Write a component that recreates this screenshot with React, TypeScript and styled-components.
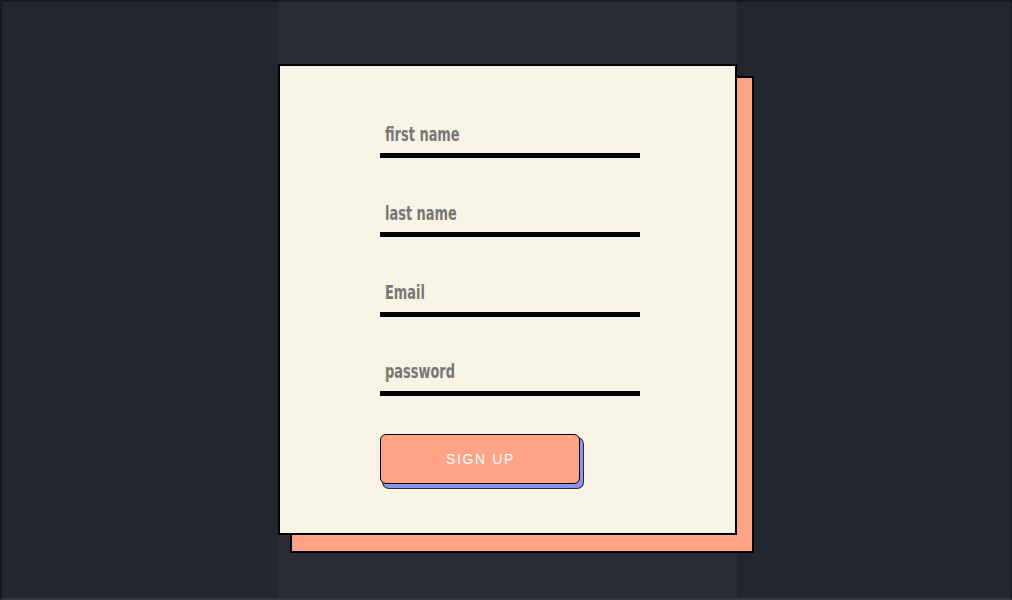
import React from "react";
import styled, { createGlobalStyle } from "styled-components";

const GlobalStyle = createGlobalStyle`
  html, body {
    margin: 0;
    padding: 0;
    background: #22262f;
  }
  *, *::before, *::after { box-sizing: border-box; }
`;

const Frame = styled.div`
  width: 1012px;
  height: 600px;
  display: flex;
  justify-content: center;
  padding-left: 1px;
  background: #22262f;
  border-top: 2px solid #17191c;
  border-left: 2px solid #17191c;
  border-right: 1px solid #17191c;
  border-bottom: 2px solid #35373a;
  overflow: hidden;
`;

const Column = styled.main`
  width: 459px;
  height: 100%;
  background: #282c35;
  padding-top: 62px;
`;

const CardWrap = styled.div`
  position: relative;
  width: 459px;
  height: 471px;

  &::before {
    content: "";
    position: absolute;
    top: 12px;
    left: 12px;
    width: 464px;
    height: 477px;
    background: #fea386;
    border: 2px solid #000;
  }
`;

const Card = styled.section`
  position: relative;
  z-index: 1;
  width: 100%;
  height: 100%;
  background: #f7f4e6;
  border: 2px solid #000;
`;

const Form = styled.form`
  display: flex;
  flex-direction: column;
  align-items: flex-start;
  gap: 35.33px;
  padding: 48px 0 0 100px;
`;

const SCALE = 0.72;

const Field = styled.label`
  display: block;
  width: 260px;
  height: 44px;
  border-bottom: 5px solid #000;
  overflow: hidden;
`;

const Input = styled.input`
  display: block;
  width: ${260 / SCALE}px;
  height: 39px;
  padding: 0 0 0 ${5 / SCALE}px;
  margin: 0;
  border: none;
  background: transparent;
  outline: none;
  transform: scaleX(${SCALE});
  transform-origin: left center;
  font-family: "DejaVu Sans Condensed", "DejaVu Sans", sans-serif;
  font-weight: 700;
  font-size: 20px;
  color: #333;

  &::placeholder {
    color: #777777;
    opacity: 1;
  }
`;

const Button = styled.button`
  width: 200px;
  height: 50px;
  margin-top: 2.67px;
  background: #fea386;
  border: 1px solid #000;
  border-radius: 6px;
  box-shadow: 3px 4px 0 0 #8b92ef, 3px 4px 0 1px #2a2a33;
  color: #ffffff;
  font-family: "Liberation Sans", Arial, sans-serif;
  font-size: 14px;
  letter-spacing: 1.6px;
  text-transform: uppercase;
  padding: 0 0 0 2px;
  cursor: pointer;
`;

export default function App() {
  return (
    <>
      <GlobalStyle />
      <Frame>
        <Column>
          <CardWrap>
            <Card>
              <Form onSubmit={(e) => e.preventDefault()}>
                <Field>
                  <Input type="text" placeholder="first name" />
                </Field>
                <Field>
                  <Input type="text" placeholder="last name" />
                </Field>
                <Field>
                  <Input type="email" placeholder="Email" />
                </Field>
                <Field>
                  <Input type="password" placeholder="password" />
                </Field>
                <Button type="submit">Sign up</Button>
              </Form>
            </Card>
          </CardWrap>
        </Column>
      </Frame>
    </>
  );
}
